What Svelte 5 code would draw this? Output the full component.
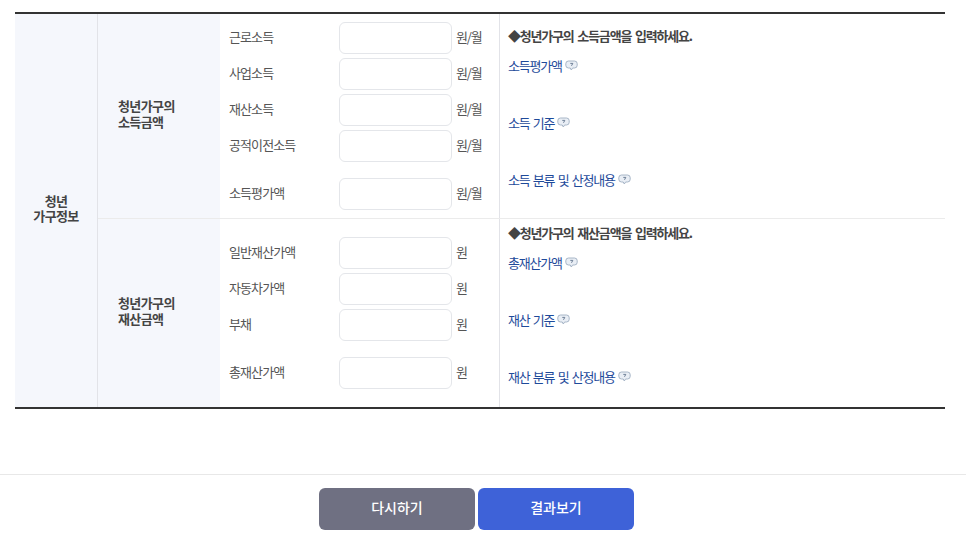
<script>
    const income = {
        title: ['청년가구의', '소득금액'],
        unit: '원/월',
        rows: ['근로소득', '사업소득', '재산소득', '공적이전소득'],
        total: '소득평가액',
        guide: '◆청년가구의 소득금액을 입력하세요.',
        links: ['소득평가액', '소득 기준', '소득 분류 및 산정내용']
    };
    const assets = {
        title: ['청년가구의', '재산금액'],
        unit: '원',
        rows: ['일반재산가액', '자동차가액', '부채'],
        total: '총재산가액',
        guide: '◆청년가구의 재산금액을 입력하세요.',
        links: ['총재산가액', '재산 기준', '재산 분류 및 산정내용']
    };
</script>

{#snippet row(label, unit)}
    <div class="row">
        <span class="label">{label}</span>
        <input class="field" type="text" />
        <span class="unit">{unit}</span>
    </div>
{/snippet}

{#snippet section(data, cls)}
    <div class="section {cls}">
        <div class="sub-head"><span>{data.title[0]}<br />{data.title[1]}</span></div>
        <div class="inputs">
            {#each data.rows as label}
                {@render row(label, data.unit)}
            {/each}
            <div class="total">
                {@render row(data.total, data.unit)}
            </div>
        </div>
        <div class="help">
            <p class="guide">{data.guide}</p>
            {#each data.links as link}
                <a class="link" href="#top">
                    {link}
                    <svg width="13" height="11" viewBox="0 0 13 11" aria-hidden="true">
                        <path d="M3.500 1h6A2.700 2.700 0 0 1 12.200 3.700v1.600A2.700 2.700 0 0 1 9.500 8H7.600L6.300 10 5.200 8H3.500A2.700 2.700 0 0 1 .8 5.300V3.700A2.700 2.700 0 0 1 3.500 1Z" fill="#e9eef5" stroke="#9fafc2" stroke-width=".9" />
                        <path d="M5.300 3.400h2.500L6.500 5.800" fill="none" stroke="#5f728b" stroke-width=".9" />
                    </svg>
                </a>
            {/each}
        </div>
    </div>
{/snippet}

<div class="page">
    <div class="table">
        <div class="main-head"><span>청년<br />가구정보</span></div>
        <div class="sections">
            {@render section(income, 'income')}
            {@render section(assets, 'assets')}
        </div>
    </div>
    <div class="footer">
        <button class="btn reset"><span>다시하기</span></button>
        <button class="btn result"><span>결과보기</span></button>
    </div>
</div>

<style>
    :global(body) {
        margin: 0;
        background: #fff;
    }

    .page {
        width: 966px;
        height: 554px;
        padding-top: 12px;
        box-sizing: border-box;
        font-family: "Noto Sans CJK KR", "Noto Sans", sans-serif;
        font-size: 13px;
        color: #555;
        letter-spacing: -0.9px;
    }

    .table {
        display: flex;
        width: 930px;
        height: 397px;
        margin-left: 15px;
        box-sizing: border-box;
        border-top: 2px solid #333;
        border-bottom: 2px solid #333;
    }

    .main-head {
        display: flex;
        align-items: center;
        justify-content: center;
        width: 83px;
        box-sizing: border-box;
        padding-bottom: 5px;
        background: #f5f7fc;
        border-right: 1px solid #e2e3e8;
        color: #444;
        font-weight: 700;
        line-height: 15px;
        letter-spacing: -0.6px;
        text-align: center;
    }

    .sections {
        display: flex;
        flex: 1;
        flex-direction: column;
    }

    .section {
        display: flex;
    }

    .income {
        height: 205px;
        border-bottom: 1px solid #ebebeb;
        box-sizing: border-box;
    }

    .assets {
        flex: 1;
    }

    .sub-head {
        display: flex;
        align-items: center;
        width: 122px;
        box-sizing: border-box;
        padding-left: 20px;
        padding-bottom: 4px;
        background: #f5f7fc;
        color: #444;
        font-weight: 700;
        line-height: 16px;
        letter-spacing: -0.6px;
    }

    .inputs {
        width: 280px;
        box-sizing: border-box;
        padding-left: 9px;
        border-right: 1px solid #e2e3e8;
    }

    .income .inputs {
        padding-top: 8px;
    }

    .assets .inputs {
        padding-top: 18px;
    }

    .row {
        display: flex;
        align-items: center;
        height: 32px;
        margin-bottom: 4px;
    }

    .total {
        margin-top: 16px;
    }

    .label {
        width: 110px;
        padding-bottom: 4px;
    }

    .field {
        width: 113px;
        height: 32px;
        margin: 0;
        padding: 0;
        box-sizing: border-box;
        background: #fff;
        border: 1px solid #e4e6ea;
        border-radius: 6px;
    }

    .unit {
        margin-left: 4px;
        padding-bottom: 4px;
        letter-spacing: -1.2px;
    }

    .help {
        flex: 1;
        padding-left: 8px;
    }

    .guide {
        height: 19px;
        margin: 0;
        padding-top: 12px;
        color: #444;
        font-weight: 700;
        line-height: 19px;
        letter-spacing: -1.2px;
        word-spacing: 2px;
    }

    .assets .guide {
        padding-top: 4px;
    }

    .link {
        display: flex;
        align-items: center;
        gap: 3px;
        height: 19px;
        margin-top: 38.3px;
        color: #1e4a9a;
        line-height: 19px;
        letter-spacing: -1.2px;
        word-spacing: 1.6px;
        text-decoration: none;
    }

    .guide + .link {
        margin-top: 10.6px;
    }

    .footer {
        display: flex;
        justify-content: center;
        gap: 3px;
        margin-top: 65px;
        padding: 13px 13px 0 0;
        border-top: 1px solid #e8e8e8;
    }

    .btn {
        width: 156px;
        height: 42px;
        padding: 0 0 4px;
        border: 0;
        border-radius: 6px;
        color: #fff;
        font-family: inherit;
        font-size: 14px;
        font-weight: 500;
        letter-spacing: 0;
    }

    .reset {
        background: #6f7082;
    }

    .result {
        background: #3e62d8;
    }
</style>
